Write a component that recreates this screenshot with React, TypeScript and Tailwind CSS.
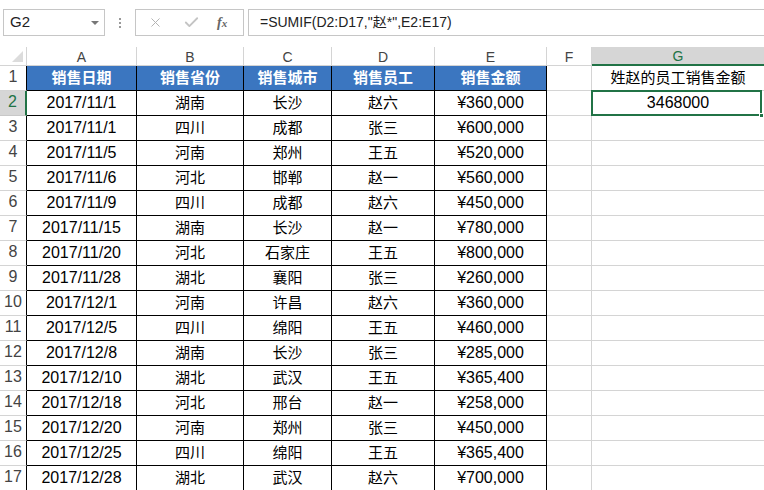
import { Check, X } from 'lucide-react';

const columns = ['A', 'B', 'C', 'D', 'E', 'F', 'G'];

const headers = ['销售日期', '销售省份', '销售城市', '销售员工', '销售金额'];

const rows: string[][] = [
  ['2017/11/1', '湖南', '长沙', '赵六', '¥360,000'],
  ['2017/11/1', '四川', '成都', '张三', '¥600,000'],
  ['2017/11/5', '河南', '郑州', '王五', '¥520,000'],
  ['2017/11/6', '河北', '邯郸', '赵一', '¥560,000'],
  ['2017/11/9', '四川', '成都', '赵六', '¥450,000'],
  ['2017/11/15', '湖南', '长沙', '赵一', '¥780,000'],
  ['2017/11/20', '河北', '石家庄', '王五', '¥800,000'],
  ['2017/11/28', '湖北', '襄阳', '张三', '¥260,000'],
  ['2017/12/1', '河南', '许昌', '赵六', '¥360,000'],
  ['2017/12/5', '四川', '绵阳', '王五', '¥460,000'],
  ['2017/12/8', '湖南', '长沙', '张三', '¥285,000'],
  ['2017/12/10', '湖北', '武汉', '王五', '¥365,400'],
  ['2017/12/18', '河北', '邢台', '赵一', '¥258,000'],
  ['2017/12/20', '河南', '郑州', '张三', '¥450,000'],
  ['2017/12/25', '四川', '绵阳', '王五', '¥365,400'],
  ['2017/12/28', '湖北', '武汉', '赵六', '¥700,000'],
];

function FormulaBar() {
  return (
    <div className="flex h-[47px] items-start gap-0 pt-[9px] pl-[3px]">
      {/* Name box */}
      <div className="flex h-[27px] w-[102px] items-center justify-between border border-[#c6c6c6] pl-[6px] pr-[5px]">
        <span className="text-[15px] text-[#222]">G2</span>
        <span className="h-0 w-0 border-x-[4px] border-t-[4px] border-x-transparent border-t-[#777]" />
      </div>
      <div className="flex h-[27px] w-[30px] flex-col items-center justify-center gap-[2px]">
        <span className="h-[2px] w-[2px] bg-[#999]" />
        <span className="h-[2px] w-[2px] bg-[#999]" />
        <span className="h-[2px] w-[2px] bg-[#999]" />
      </div>
      {/* Buttons */}
      <div className="flex h-[27px] w-[109px] items-center border border-[#c6c6c6]">
        <X size={15} strokeWidth={1.6} className="ml-[12px] text-[#b4b4b4]" />
        <Check size={17} strokeWidth={2.6} className="ml-[20px] text-[#c4c4c4]" />
        <span className="ml-[17px] font-['Liberation_Serif',serif] text-[14px] font-bold italic text-[#666]">
          f<span className="text-[11px]">x</span>
        </span>
      </div>
      {/* Formula */}
      <div className="ml-[4px] flex h-[27px] flex-1 items-center border border-r-0 border-[#c6c6c6] pl-[11px] text-[14px] text-[#222]">
        =SUMIF(D2:D17,"赵*",E2:E17)
      </div>
    </div>
  );
}

export default function App() {
  return (
    <div className="h-[490px] w-[764px] overflow-hidden bg-white font-['Liberation_Sans','Noto_Sans_CJK_SC',sans-serif] text-black">
      <FormulaBar />

      <div className="grid grid-cols-[27px_110px_107px_88px_103px_112px_45px_172px] grid-rows-[19px_repeat(17,25px)]">
        {/* Column headers */}
        <div className="relative border-r border-b border-[#d4d4d4]">
          <span className="absolute right-[3px] bottom-[3px] h-0 w-0 border-b-[11px] border-l-[11px] border-l-transparent border-b-[#dcdcdc]" />
        </div>
        {columns.map((c) =>
          c === 'G' ? (
            <div
              key={c}
              className="flex items-center justify-center border-b-2 border-[#217346] bg-[#d6d6d6] pt-[2px] text-[14px] text-[#217346]"
            >
              {c}
            </div>
          ) : (
            <div
              key={c}
              className="flex items-center justify-center border-r border-b border-[#d4d4d4] pt-[2px] text-[14px] text-[#444]"
            >
              {c}
            </div>
          )
        )}

        {/* Row 1 */}
        <div className="flex items-end justify-center border-r border-b border-r-black border-b-[#d4d4d4] pb-[1px] text-[16px] text-[#444]">
          1
        </div>
        {headers.map((h) => (
          <div
            key={h}
            className="flex items-center justify-center border-r border-b border-black bg-[#3b76c0] text-[15px] font-bold text-white"
          >
            {h}
          </div>
        ))}
        <div className="border-r border-b border-[#d4d4d4]" />
        <div className="flex items-center justify-center border-b border-[#d4d4d4] text-[15px]">
          姓赵的员工销售金额
        </div>

        {/* Data rows */}
        {rows.map((r, i) => {
          const n = i + 2;
          const selected = n === 2;
          return [
            <div
              key={`h${n}`}
              className={
                selected
                  ? 'flex items-end justify-center border-r-2 border-b border-r-[#217346] border-b-[#c8c8c8] bg-[#d6d6d6] pb-[1px] text-[16px] text-[#217346]'
                  : 'flex items-end justify-center border-r border-b border-r-black border-b-[#d4d4d4] pb-[1px] text-[16px] text-[#444]'
              }
            >
              {n}
            </div>,
            ...r.map((v, j) => (
              <div
                key={`c${n}-${j}`}
                className={`flex items-center justify-center border-r border-b border-black ${
                  j === 0 || j === 4 ? 'text-[16px]' : 'text-[15px]'
                }`}
              >
                {v}
              </div>
            )),
            <div key={`f${n}`} className="border-r border-b border-[#d4d4d4]" />,
            <div key={`g${n}`} className="relative flex items-center justify-center border-b border-[#d4d4d4] text-[16px]">
              {selected ? (
                <>
                  3468000
                  <span className="absolute -top-[1px] -left-[1px] right-[2px] -bottom-[1px] border-2 border-[#217346]" />
                  <span className="absolute right-0 -bottom-[3px] h-[5px] w-[5px] border border-white bg-[#217346]" />
                </>
              ) : null}
            </div>,
          ];
        })}
      </div>
    </div>
  );
}
